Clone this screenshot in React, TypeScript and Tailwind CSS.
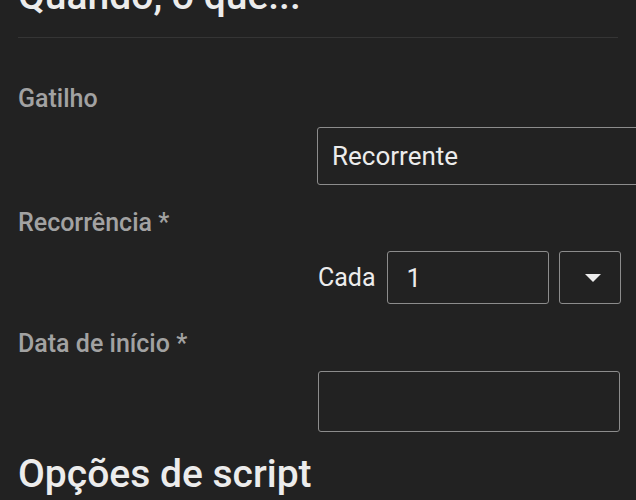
export default function App() {
  return (
    <div className="h-[500px] w-[636px] overflow-hidden bg-[#222222] px-[18px] font-['Roboto',sans-serif]">
      {/* Section heading, partly scrolled out of view */}
      <h2 className="mt-[-27px] text-[39px] font-medium leading-[46px] text-[#ececec]">
        Quando, o que...
      </h2>
      <div className="mt-[18px] border-t border-[#353535]" />

      {/* Gatilho */}
      <div className="mt-[46px] text-[25px] font-medium leading-[29px] text-[#a2a2a2]">Gatilho</div>
      <div className="ml-[299px] mt-[14px] flex h-[58px] w-[340px] items-center rounded-[3px] border border-[#8c8c8c] px-[14px]">
        <span className="text-[26px] leading-[30px] text-[#ececec]">Recorrente</span>
      </div>

      {/* Recorrência */}
      <div className="mt-[23px] text-[25px] font-medium leading-[29px] text-[#a2a2a2]">Recorrência *</div>
      <div className="ml-[300px] mt-[14px] flex h-[53px] w-[330px] items-center">
        <span className="shrink-0 text-[25px] leading-[29px] text-[#ececec]">Cada</span>
        <div className="ml-[11px] flex h-full w-[162px] shrink-0 items-center rounded-[3px] border border-[#8c8c8c] px-[19px]">
          <span className="text-[26px] leading-[30px] text-[#ececec]">1</span>
        </div>
        <div className="ml-[10px] flex h-full w-[62px] shrink-0 items-center justify-center rounded-[3px] border border-[#8c8c8c] pl-[7px]">
          <svg width="16" height="8" viewBox="0 0 16 8">
            <path d="M0 0 L16 0 L8 8 Z" fill="#ececec" />
          </svg>
        </div>
      </div>

      {/* Data de início */}
      <div className="mt-[25px] text-[25px] font-medium leading-[29px] text-[#a2a2a2]">Data de início *</div>
      <div className="ml-[300px] mt-[13px] h-[61px] w-[302px] rounded-[3px] border border-[#8c8c8c]" />

      <h2 className="mt-[19px] text-[39px] font-medium leading-[46px] text-[#ececec]">
        Opções de script
      </h2>
    </div>
  );
}
